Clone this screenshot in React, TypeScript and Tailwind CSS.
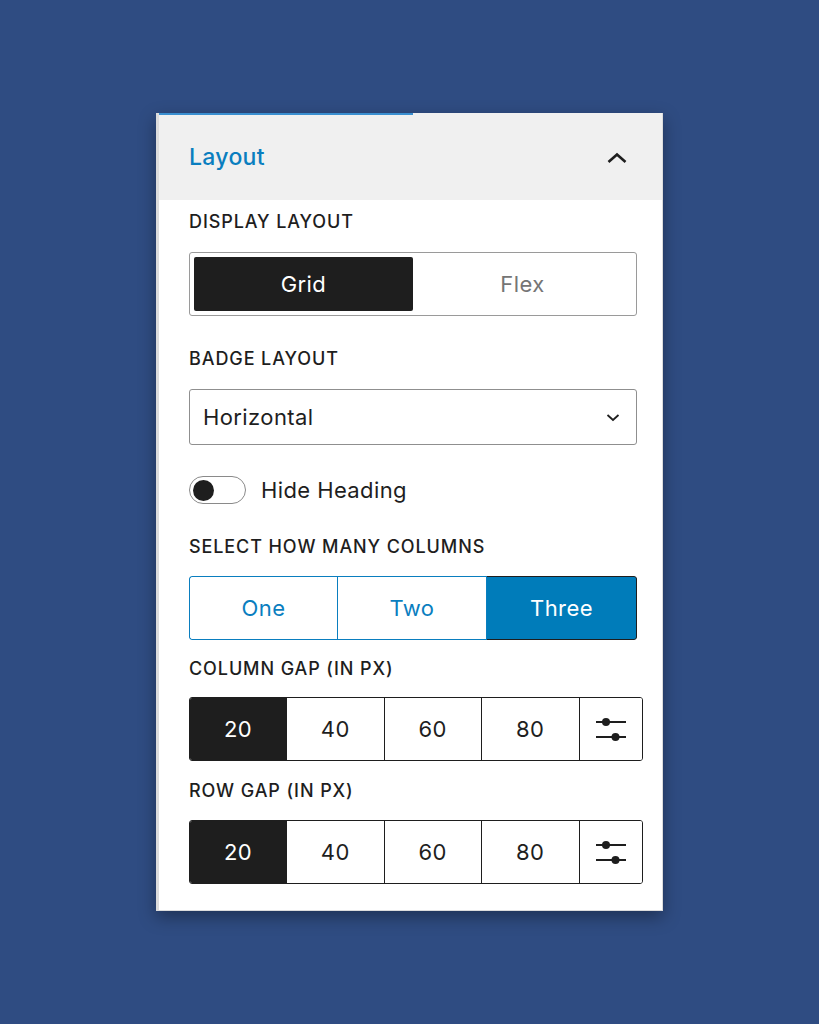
import type { ReactElement } from "react";

const gaps = ["20", "40", "60", "80"];

function SlidersIcon(): ReactElement {
  return (
    <svg width="30" height="24" viewBox="0 0 30 24" fill="none">
      <line x1="0" y1="5" x2="30" y2="5" stroke="#1e1e1e" strokeWidth="2" />
      <circle cx="10" cy="5" r="4" fill="#1e1e1e" />
      <line x1="0" y1="20" x2="30" y2="20" stroke="#1e1e1e" strokeWidth="2" />
      <circle cx="19.5" cy="20" r="4" fill="#1e1e1e" />
    </svg>
  );
}

function Label({ children }: { children: string }): ReactElement {
  return (
    <div className="h-6 flex items-center text-[18px] font-medium tracking-[0.9px] text-[#1e1e1e] leading-none">
      {children}
    </div>
  );
}

function GapGroup(): ReactElement {
  return (
    <div className="flex w-[454px] h-16 border-[1.5px] border-[#1e1e1e] rounded-[3px] overflow-hidden text-[22px] tracking-[0.4px]">
      {gaps.map((g, i) => (
        <div
          key={g}
          className={
            i === 0
              ? "w-[96px] flex items-center justify-center bg-[#1e1e1e] text-white"
              : "w-[97.5px] flex items-center justify-center bg-white text-[#1e1e1e] border-l-[1.5px] border-[#1e1e1e]"
          }
        >
          {g}
        </div>
      ))}
      <div className="flex-1 flex items-center justify-center border-l-[1.5px] border-[#1e1e1e] bg-white pl-[1px]">
        <SlidersIcon />
      </div>
    </div>
  );
}

export default function App(): ReactElement {
  return (
    <div
      className="w-[819px] h-[1024px] bg-[#2f4c82] pt-[113px] pl-[156px]"
      style={{ fontFamily: "Inter, 'Noto Sans', sans-serif" }}
    >
      <div className="relative w-[507px] bg-white border-l-[3px] border-r border-b border-[#dcdcdc] shadow-[0_6px_16px_rgba(0,0,0,0.35)]">
        <div className="absolute top-0 left-0 w-[254px] h-[2px] bg-[#3a8fd0]" />

        {/* Header */}
        <div className="h-[87px] bg-[#f0f0f0] flex items-center justify-between pl-[30px] pr-[34px] pt-[2px]">
          <span className="text-[23px] font-medium tracking-[0.3px] text-[#0a7ebf]">Layout</span>
          <svg width="22" height="14" viewBox="0 0 22 14" fill="none">
            <path d="M2.5 11 L11 3.5 L19.5 11" stroke="#1e1e1e" strokeWidth="2.6" />
          </svg>
        </div>

        {/* Body */}
        <div className="pl-[30px] pr-[20px] pt-[10px] pb-[26px] flex flex-col text-[22px] tracking-[0.4px]">
          <Label>DISPLAY LAYOUT</Label>

          <div className="mt-[18px] w-[448px] h-16 border-[1.5px] border-[#9a9a9a] rounded-[3px] p-[4px] flex">
            <div className="w-[219px] bg-[#1e1e1e] rounded-[2px] flex items-center justify-center text-white">
              Grid
            </div>
            <div className="flex-1 flex items-center justify-center text-[#757575]">Flex</div>
          </div>

          <div className="mt-[31px]">
            <Label>BADGE LAYOUT</Label>
          </div>

          <div className="mt-[18px] w-[448px] h-14 border-[1.5px] border-[#8f8f8f] rounded-[3px] flex items-center justify-between pl-[13px] pr-[16px]">
            <span className="text-[#1e1e1e]">Horizontal</span>
            <svg width="14" height="9" viewBox="0 0 14 9" fill="none">
              <path d="M1.5 2 L7 7 L12.5 2" stroke="#1e1e1e" strokeWidth="1.8" />
            </svg>
          </div>

          <div className="mt-[29px] h-8 flex items-center gap-[15px]">
            <div className="w-[57px] h-[28px] rounded-full border-[1.5px] border-[#8a8a8a] bg-white flex items-center pl-[3px]">
              <div className="w-[21px] h-[21px] rounded-full bg-[#1e1e1e]" />
            </div>
            <span className="text-[#1e1e1e]">Hide Heading</span>
          </div>

          <div className="mt-[29px]">
            <Label>SELECT HOW MANY COLUMNS</Label>
          </div>

          <div className="mt-[17px] w-[448px] h-16 flex rounded-[3px] overflow-hidden">
            <div className="w-[148px] flex items-center justify-center border-[1.5px] border-r-0 border-[#0a7ebf] rounded-l-[3px] text-[#0a7ebf]">
              One
            </div>
            <div className="w-[150px] flex items-center justify-center border-[1.5px] border-[#0a7ebf] text-[#0a7ebf]">
              Two
            </div>
            <div className="flex-1 flex items-center justify-center bg-[#007cba] border-[1.5px] border-l-0 border-[#1e1e1e] rounded-r-[3px] text-white">
              Three
            </div>
          </div>

          <div className="mt-[17px]">
            <Label>COLUMN GAP (IN PX)</Label>
          </div>
          <div className="mt-[16px]">
            <GapGroup />
          </div>

          <div className="mt-[18px]">
            <Label>ROW GAP (IN PX)</Label>
          </div>
          <div className="mt-[17px]">
            <GapGroup />
          </div>
        </div>
      </div>
    </div>
  );
}
